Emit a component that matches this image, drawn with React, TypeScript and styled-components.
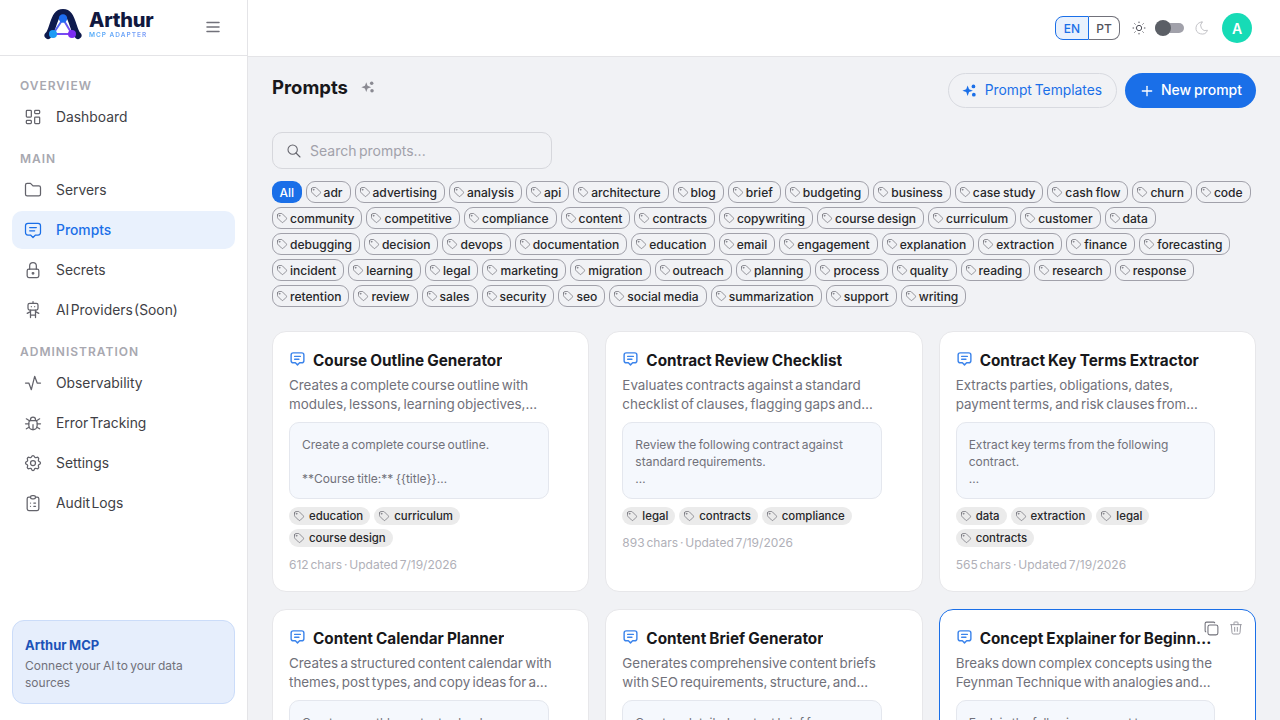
import React from "react"
import styled, { createGlobalStyle } from "styled-components"
import {
  TbActivity, TbBug, TbClipboardList, TbCopy, TbFolder, TbLayoutDashboard, TbLock,
  TbMenu2, TbMessage2, TbMoon, TbPlus, TbRobot, TbSearch, TbSettings, TbSun, TbTag, TbTrash,
} from "react-icons/tb"

const GlobalStyle = createGlobalStyle`
  html, body { margin: 0; padding: 0; height: 100%; overflow: hidden; }
  body {
    font-family: "Inter", "Liberation Sans", sans-serif;
    word-spacing: -1.5px;
    color: #18181b;
  }
  * { box-sizing: border-box; }
`

const Shell = styled.div`
  display: flex;
  width: 100%;
  height: 100vh;
  overflow: hidden;
  background: #f1f2f5;
`

const Sidebar = styled.aside`
  flex: 0 0 248px;
  display: flex;
  flex-direction: column;
  background: #fff;
  border-right: 1px solid #e4e4e7;
`

const Brand = styled.div`
  height: 56px;
  flex: none;
  display: flex;
  align-items: center;
  padding: 0 25px 1px 44px;
  border-bottom: 1px solid #e4e4e7;
  color: #71717a;
`

const LogoMark = styled.svg`
  flex: none;
  margin-bottom: 7px;
`

const BrandText = styled.div`
  display: flex;
  flex-direction: column;
  margin-left: 7px;
  padding-bottom: 6px;
  flex: 1;
`

const BrandName = styled.span`
  font-size: 20px;
  line-height: 21px;
  font-weight: 800;
  color: #11183f;
  letter-spacing: -0.2px;
`

const BrandSub = styled.span`
  font-size: 6.5px;
  line-height: 8px;
  font-weight: 600;
  letter-spacing: 1px;
  word-spacing: 0;
  background: linear-gradient(90deg, #48a8f8, #a88cf8);
  -webkit-background-clip: text;
  background-clip: text;
  color: transparent;
`

const Nav = styled.nav`
  flex: 1;
  display: flex;
  flex-direction: column;
  padding: 22px 12px 0;
`

const SectionLabel = styled.div`
  height: 16px;
  line-height: 16px;
  margin: 0 8px 4px;
  font-size: 12px;
  font-weight: 600;
  letter-spacing: 1px;
  word-spacing: 0;
  color: #a8a8b0;
  &:not(:first-child) { margin-top: 13px; }
`

const NavItem = styled.a<{ $active?: boolean }>`
  height: 38px;
  flex: none;
  display: flex;
  align-items: center;
  gap: 13px;
  padding: 0 11px 1px;
  margin-bottom: 2px;
  border-radius: 10px;
  font-size: 13.85px;
  word-spacing: -2.5px;
  font-weight: ${p => (p.$active ? 500 : 400)};
  color: ${p => (p.$active ? "#1a6fe8" : "#3f3f46")};
  background: ${p => (p.$active ? "#e9f1fd" : "transparent")};
  svg { color: ${p => (p.$active ? "#1a6fe8" : "#63636b")}; flex: none; margin-top: 1px; }
`

const InfoCard = styled.div`
  margin: 0 12px 16px;
  height: 84px;
  padding: 14px 12px 0;
  border-radius: 12px;
  background: #e6eefc;
  border: 1px solid #cbdcf9;
`

const InfoTitle = styled.div`
  font-size: 13px;
  line-height: 20px;
  font-weight: 700;
  word-spacing: -0.5px;
  color: #1c52b8;
`

const InfoText = styled.div`
  margin-top: 2px;
  font-size: 12px;
  word-spacing: -1px;
  line-height: 17px;
  color: #71717a;
`

const Main = styled.div`
  flex: 1;
  min-width: 0;
  display: flex;
  flex-direction: column;
`

const TopBar = styled.header`
  height: 57px;
  flex: none;
  display: flex;
  align-items: center;
  justify-content: flex-end;
  padding: 0 28px 0 0;
  background: #fff;
  border-bottom: 1px solid #e4e4e7;
`

const LangSwitch = styled.div`
  display: flex;
  height: 24px;
  margin-right: 11px;
`

const LangButton = styled.span<{ $active?: boolean }>`
  display: flex;
  align-items: center;
  justify-content: center;
  font-size: 12px;
  font-weight: 500;
  width: ${p => (p.$active ? "34px" : "31px")};
  color: ${p => (p.$active ? "#1a6fe8" : "#52525b")};
  background: ${p => (p.$active ? "#e9f1fd" : "#fff")};
  border: 1px solid ${p => (p.$active ? "#1a6fe8" : "#71717a")};
  border-left-width: ${p => (p.$active ? "1px" : "0")};
  border-radius: ${p => (p.$active ? "8px 0 0 8px" : "0 8px 8px 0")};
`

const ThemeToggle = styled.div`
  display: flex;
  align-items: center;
  gap: 8px;
  margin-right: 12px;
`

const Track = styled.span`
  position: relative;
  display: block;
  width: 29px;
  height: 10px;
  margin-right: 2px;
  border-radius: 5px;
  background: #a1a1aa;
`

const Thumb = styled.span`
  position: absolute;
  left: 0;
  top: -3px;
  width: 16px;
  height: 16px;
  border-radius: 50%;
  background: #5b5f66;
`

const Avatar = styled.div`
  width: 30px;
  height: 30px;
  border-radius: 50%;
  display: flex;
  align-items: center;
  justify-content: center;
  background: #17dbb6;
  color: #fff;
  font-size: 14px;
  font-weight: 600;
`

const Content = styled.main`
  flex: 1;
  min-height: 0;
  overflow: hidden;
  padding: 16px 24px 0;
`

const PageHead = styled.div`
  display: flex;
  align-items: center;
  justify-content: space-between;
  height: 35px;
`

const PageTitle = styled.div`
  display: flex;
  align-items: center;
  gap: 13px;
  margin-top: -8px;
  h1 {
    margin: 0;
    font-size: 18.5px;
    line-height: 28px;
    font-weight: 700;
    color: #18181b;
  }
`

const HeadActions = styled.div`
  display: flex;
  gap: 8px;
`

const PillButton = styled.button<{ $primary?: boolean }>`
  height: 35px;
  display: flex;
  align-items: center;
  padding: ${p => (p.$primary ? "0 14px 2px" : "0 14px 1px 13px")};
  gap: ${p => (p.$primary ? "6px" : "8px")};
  border-radius: 18px;
  font-family: inherit;
  word-spacing: -1px;
  font-size: ${p => (p.$primary ? "14px" : "13.8px")};
  font-weight: ${p => (p.$primary ? 500 : 400)};
  color: ${p => (p.$primary ? "#fff" : "#1a6fe8")};
  background: ${p => (p.$primary ? "#1a6fe8" : "transparent")};
  border: ${p => (p.$primary ? "none" : "1px solid #d8dae0")};
  svg { flex: none; margin-top: ${p => (p.$primary ? "2px" : "1px")}; }
`

const SearchBox = styled.label`
  display: flex;
  align-items: center;
  gap: 8px;
  width: 280px;
  height: 37px;
  margin-top: 24px;
  padding: 0 13px;
  border: 1px solid #d6d7dc;
  border-radius: 10px;
  color: #63636b;
  span {
    font-size: 14px;
    color: #a1a1aa;
  }
`

const FilterBar = styled.div`
  display: flex;
  flex-direction: column;
  gap: 4px;
  margin-top: 12px;
`

const FilterRow = styled.div`
  display: flex;
  gap: 4px;
`

const AllChip = styled.span`
  height: 22px;
  display: flex;
  align-items: center;
  padding: 0 7.5px;
  border-radius: 9px;
  background: #1a6fe8;
  color: #fff;
  font-size: 12px;
  font-weight: 500;
`

const FilterChip = styled.span`
  height: 22px;
  display: flex;
  align-items: center;
  gap: 2px;
  padding: 0 7px 0 3px;
  border: 1px solid #a1a1aa;
  border-radius: 9px;
  font-size: 12.05px;
  word-spacing: -0.5px;
  font-weight: 450;
  color: #27272a;
  white-space: nowrap;
  svg { color: #71717a; flex: none; }
`

const CardGrid = styled.div`
  display: grid;
  grid-template-columns: repeat(3, 1fr);
  gap: 16.7px 16px;
  margin-top: 24px;
`

const Card = styled.article<{ $hover?: boolean }>`
  position: relative;
  min-height: 261px;
  padding: 19px 16px 0;
  background: #fff;
  border: 1px solid ${p => (p.$hover ? "#1a6fe8" : "#e7e7ea")};
  border-radius: 14px;
`

const CardTitle = styled.div`
  display: flex;
  align-items: flex-start;
  gap: 7px;
  svg { color: #1a6fe8; flex: none; opacity: 0.85; margin-top: -1px; }
  h3 {
    margin: 0;
    min-width: 0;
    max-width: 234px;
    font-size: 15.3px;
    word-spacing: -0.5px;
    line-height: 20px;
    font-weight: 700;
    color: #18181b;
    white-space: nowrap;
    overflow: hidden;
    text-overflow: ellipsis;
  }
`

const Description = styled.p`
  width: 264px;
  margin: 5px 0 0;
  font-size: 13.4px;
  line-height: 19px;
  color: #71717a;
`

const PromptBox = styled.div`
  width: 259.5px;
  height: 77px;
  margin-top: 8px;
  padding: 13px 12px;
  background: #f5f8fd;
  border: 1px solid #e4e7ee;
  border-radius: 10px;
  font-size: 12px;
  word-spacing: -1px;
  line-height: 17px;
  color: #71717a;
  white-space: pre-line;
`

const TagRow = styled.div`
  display: flex;
  flex-wrap: wrap;
  gap: 4px;
  width: 259px;
  margin-top: 8px;
`

const Tag = styled.span`
  height: 18px;
  display: flex;
  align-items: center;
  gap: 4px;
  padding: 0 7px 0 4px;
  border-radius: 9px;
  background: #ebebeb;
  font-size: 11.4px;
  word-spacing: -0.5px;
  font-weight: 500;
  color: #27272a;
  svg { color: #71717a; flex: none; }
`

const Meta = styled.div`
  margin-top: 9px;
  font-size: 12px;
  line-height: 18px;
  color: #b0b0b8;
`

const CardActions = styled.div`
  position: absolute;
  top: 10px;
  right: 11px;
  display: flex;
  align-items: center;
  gap: 8px;
  color: #71717a;
  svg + svg { color: #9a9aa2; }
`

const Sparkles = ({ size = 16, color = "currentColor" }: { size?: number; color?: string }) => (
  <svg width={size} height={size} viewBox="0 0 16 16" fill={color}>
    <path d="M6 2.600 7.500 6.700 11.600 8.200 7.500 9.700 6 13.800 4.500 9.700 0.400 8.200 4.500 6.700Z" />
    <circle cx="12.200" cy="3.600" r="2" />
    <circle cx="12.600" cy="12.400" r="2" />
  </svg>
)

const Logo = () => (
  <LogoMark width="38" height="32" viewBox="0 0 38 32" fill="none">
    <defs>
      <linearGradient id="edge" x1="0" y1="0" x2="1" y2="1">
        <stop offset="0" stopColor="#2f7bf2" />
        <stop offset="1" stopColor="#8b3df2" />
      </linearGradient>
    </defs>
    <path d="M4 27.500C8 24 9 13 13 7.500 16 3.500 22 3.500 25 7.500 29 13 30 24 34 27.500" stroke="#0e1a4d" strokeWidth="7" strokeLinecap="round" />
    <path d="M19 11 9 26H28Z" fill="#fff" stroke="url(#edge)" strokeWidth="2" strokeLinejoin="round" />
    <circle cx="19" cy="10.500" r="4.200" fill="#1e6cf0" />
    <circle cx="9" cy="26" r="4" fill="#1d9bf5" />
    <circle cx="28" cy="26" r="4" fill="#7b2df2" />
  </LogoMark>
)

const overview = [{ label: "Dashboard", icon: TbLayoutDashboard }]
const mainNav = [
  { label: "Servers", icon: TbFolder },
  { label: "Prompts", icon: TbMessage2, active: true },
  { label: "Secrets", icon: TbLock },
  { label: "AI Providers (Soon)", icon: TbRobot },
]
const adminNav = [
  { label: "Observability", icon: TbActivity },
  { label: "Error Tracking", icon: TbBug },
  { label: "Settings", icon: TbSettings },
  { label: "Audit Logs", icon: TbClipboardList },
]

const filterRows = [
  ["adr", "advertising", "analysis", "api", "architecture", "blog", "brief", "budgeting", "business", "case study", "cash flow", "churn", "code"],
  ["community", "competitive", "compliance", "content", "contracts", "copywriting", "course design", "curriculum", "customer", "data"],
  ["debugging", "decision", "devops", "documentation", "education", "email", "engagement", "explanation", "extraction", "finance", "forecasting"],
  ["incident", "learning", "legal", "marketing", "migration", "outreach", "planning", "process", "quality", "reading", "research", "response"],
  ["retention", "review", "sales", "security", "seo", "social media", "summarization", "support", "writing"],
]

const prompts = [
  {
    title: "Course Outline Generator",
    description: "Creates a complete course outline with modules, lessons, learning objectives,…",
    body: "Create a complete course outline.\n\n**Course title:** {{title}}…",
    tags: ["education", "curriculum", "course design"],
    meta: "612 chars · Updated 7/19/2026",
  },
  {
    title: "Contract Review Checklist",
    description: "Evaluates contracts against a standard checklist of clauses, flagging gaps and…",
    body: "Review the following contract against standard requirements.\n…",
    tags: ["legal", "contracts", "compliance"],
    meta: "893 chars · Updated 7/19/2026",
  },
  {
    title: "Contract Key Terms Extractor",
    description: "Extracts parties, obligations, dates, payment terms, and risk clauses from…",
    body: "Extract key terms from the following contract.\n…",
    tags: ["data", "extraction", "legal", "contracts"],
    meta: "565 chars · Updated 7/19/2026",
  },
  {
    title: "Content Calendar Planner",
    description: "Creates a structured content calendar with themes, post types, and copy ideas for a…",
    body: "Create a monthly content calendar",
  },
  {
    title: "Content Brief Generator",
    description: "Generates comprehensive content briefs with SEO requirements, structure, and…",
    body: "Create a detailed content brief for a",
  },
  {
    title: "Concept Explainer for Beginners",
    description: "Breaks down complex concepts using the Feynman Technique with analogies and…",
    body: "Explain the following concept to a",
    hover: true,
  },
]

const App = () => {
  return (
    <Shell>
      <GlobalStyle />
      <Sidebar>
        <Brand>
          <Logo />
          <BrandText>
            <BrandName>Arthur</BrandName>
            <BrandSub>MCP ADAPTER</BrandSub>
          </BrandText>
          <TbMenu2 size={18} />
        </Brand>
        <Nav>
          <SectionLabel>OVERVIEW</SectionLabel>
          {overview.map(i => <NavItem key={i.label}><i.icon size={20} strokeWidth={1.5} />{i.label}</NavItem>)}
          <SectionLabel>MAIN</SectionLabel>
          {mainNav.map(i => <NavItem key={i.label} $active={i.active}><i.icon size={20} strokeWidth={1.5} />{i.label}</NavItem>)}
          <SectionLabel>ADMINISTRATION</SectionLabel>
          {adminNav.map(i => <NavItem key={i.label}><i.icon size={20} strokeWidth={1.5} />{i.label}</NavItem>)}
        </Nav>
        <InfoCard>
          <InfoTitle>Arthur MCP</InfoTitle>
          <InfoText>Connect your AI to your data sources</InfoText>
        </InfoCard>
      </Sidebar>
      <Main>
        <TopBar>
          <LangSwitch>
            <LangButton $active>EN</LangButton>
            <LangButton>PT</LangButton>
          </LangSwitch>
          <ThemeToggle>
            <TbSun size={16} strokeWidth={1.5} color="#52525b" />
            <Track><Thumb /></Track>
            <TbMoon size={16} strokeWidth={1.5} color="#c4c4c8" />
          </ThemeToggle>
          <Avatar>A</Avatar>
        </TopBar>
        <Content>
          <PageHead>
            <PageTitle>
              <h1>Prompts</h1>
              <Sparkles size={14} color="#8a8a92" />
            </PageTitle>
            <HeadActions>
              <PillButton><Sparkles size={15} />Prompt Templates</PillButton>
              <PillButton $primary><TbPlus size={16} />New prompt</PillButton>
            </HeadActions>
          </PageHead>
          <SearchBox>
            <TbSearch size={16} strokeWidth={1.6} />
            <span>Search prompts...</span>
          </SearchBox>
          <FilterBar>
            {filterRows.map((row, idx) => (
              <FilterRow key={row[0]}>
                {idx === 0 && <AllChip>All</AllChip>}
                {row.map(f => <FilterChip key={f}><TbTag size={12} strokeWidth={1.5} />{f}</FilterChip>)}
              </FilterRow>
            ))}
          </FilterBar>
          <CardGrid>
            {prompts.map(p => (
              <Card key={p.title} $hover={p.hover}>
                {p.hover && (
                  <CardActions>
                    <TbCopy size={17} strokeWidth={1.5} />
                    <TbTrash size={16} strokeWidth={1.5} />
                  </CardActions>
                )}
                <CardTitle>
                  <TbMessage2 size={17} strokeWidth={2} />
                  <h3>{p.title}</h3>
                </CardTitle>
                <Description>{p.description}</Description>
                <PromptBox>{p.body}</PromptBox>
                {p.tags && (
                  <TagRow>
                    {p.tags.map(t => <Tag key={t}><TbTag size={12} strokeWidth={1.5} />{t}</Tag>)}
                  </TagRow>
                )}
                {p.meta && <Meta>{p.meta}</Meta>}
              </Card>
            ))}
          </CardGrid>
        </Content>
      </Main>
    </Shell>
  )
}

export default App
